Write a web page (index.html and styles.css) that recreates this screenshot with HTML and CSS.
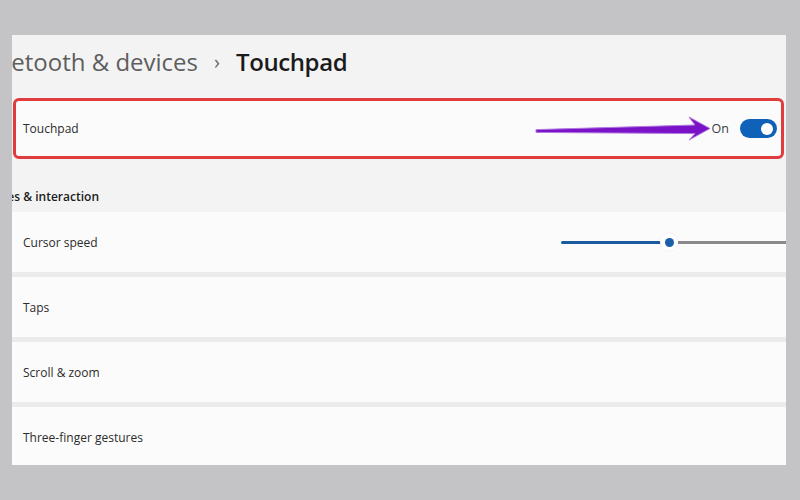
FILE: index.html
```html
<!DOCTYPE html>
<html>
<head>
<meta charset="utf-8">
<link rel="stylesheet" href="styles.css">
</head>
<body>
<div class="window">
  <div class="title">
    <div class="crumb-clip"><span class="crumb">Bluetooth &amp; devices</span></div>
    <span class="chev">›</span>
    <span class="current">Touchpad</span>
  </div>

  <div class="card card-main">
    <span class="label">Touchpad</span>
    <div class="toggle-group">
      <span class="state">On</span>
      <span class="toggle"><span class="knob"></span></span>
    </div>
  </div>

  <div class="section-clip"><span class="section">Gestures &amp; interaction</span></div>

  <div class="list">
    <div class="row">
      <span class="label">Cursor speed</span>
      <div class="slider">
        <span class="fill"></span>
        <span class="thumb"><span class="dot"></span></span>
        <span class="rest"></span>
      </div>
    </div>
    <div class="row"><span class="label">Taps</span></div>
    <div class="row"><span class="label">Scroll &amp; zoom</span></div>
    <div class="row"><span class="label">Three-finger gestures</span></div>
  </div>
</div>

<svg class="arrow" width="800" height="500" viewBox="0 0 800 500">
  <polygon points="536,129.6 695,125 689,117 710,128.5 689,140 695,133.6 536,132.4"
    fill="#7a12c8" stroke="#b27ae0" stroke-width="1" stroke-linejoin="round"/>
</svg>
</body>
</html>
```

FILE: styles.css
```css
html, body {
  margin: 0;
  padding: 0;
}
body {
  background: #c4c4c6;
  width: 800px;
  height: 500px;
  overflow: hidden;
  position: relative;
  font-family: "Open Sans", "Noto Sans", sans-serif;
}
.window {
  margin: 35px 14px 0 12px;
  height: 430px;
  background: #f3f3f3;
  overflow: hidden;
  display: flex;
  flex-direction: column;
}
.window > * {
  flex: none;
}
.title {
  display: flex;
  align-items: center;
  height: 32px;
  margin-top: 11px;
  font-size: 24px;
  line-height: 32px;
  white-space: nowrap;
}
.crumb-clip {
  width: 186px;
  display: flex;
  justify-content: flex-end;
  overflow: hidden;
  flex: none;
}
.crumb {
  color: #5e5e5e;
  flex: none;
}
.chev {
  color: #6a6a6a;
  font-size: 20px;
  width: 38px;
  text-align: center;
  flex: none;
}
.current {
  color: #1b1b1b;
  font-weight: 600;
  letter-spacing: -0.4px;
}
.card {
  background: #fbfbfb;
  display: flex;
  align-items: center;
  justify-content: space-between;
  box-sizing: border-box;
}
.card-main {
  margin: 20px 2px 0 1px;
  height: 61px;
  border: 3px solid #e03c3e;
  border-radius: 6px;
  padding: 0 4px 0 7px;
}
.label {
  font-size: 12px;
  color: #2b2b2b;
}
.toggle-group {
  display: flex;
  align-items: center;
  gap: 11px;
}
.state {
  font-size: 12.5px;
  color: #3a3a3a;
}
.toggle {
  width: 37px;
  height: 19px;
  border-radius: 10px;
  background: #0f62b8;
  display: flex;
  align-items: center;
  justify-content: flex-end;
  padding-right: 4px;
  box-sizing: border-box;
}
.knob {
  width: 12px;
  height: 12px;
  border-radius: 50%;
  background: #ffffff;
}
.section-clip {
  margin-top: 28px;
  width: 87px;
  height: 20px;
  display: flex;
  justify-content: flex-end;
  overflow: hidden;
  white-space: nowrap;
}
.section {
  flex: none;
  font-size: 12px;
  line-height: 20px;
  font-weight: 600;
  color: #1c1c1c;
}
.list {
  margin-top: 5px;
  margin-right: -40px;
  display: flex;
  flex-direction: column;
  gap: 5px;
  background: #ebebeb;
}
.row {
  height: 60px;
  flex: none;
  background: #fbfbfb;
  display: flex;
  align-items: center;
  padding-left: 11px;
  position: relative;
}
.slider {
  position: absolute;
  left: 549px;
  top: 21px;
  width: 260px;
  height: 18px;
  display: flex;
  align-items: center;
}
.fill {
  width: 100px;
  height: 3px;
  border-radius: 2px;
  background: #1a5a9e;
}
.thumb {
  width: 18px;
  height: 18px;
  border-radius: 50%;
  background: #ffffff;
  display: flex;
  align-items: center;
  justify-content: center;
  box-shadow: 0 0 1px rgba(0,0,0,0.15);
  margin-left: -1px;
}
.dot {
  width: 9px;
  height: 9px;
  border-radius: 50%;
  background: #1a5fa8;
}
.rest {
  flex: 1;
  height: 3px;
  background: #8a8a8a;
}
.arrow {
  position: absolute;
  left: 0;
  top: 0;
  pointer-events: none;
}
```
